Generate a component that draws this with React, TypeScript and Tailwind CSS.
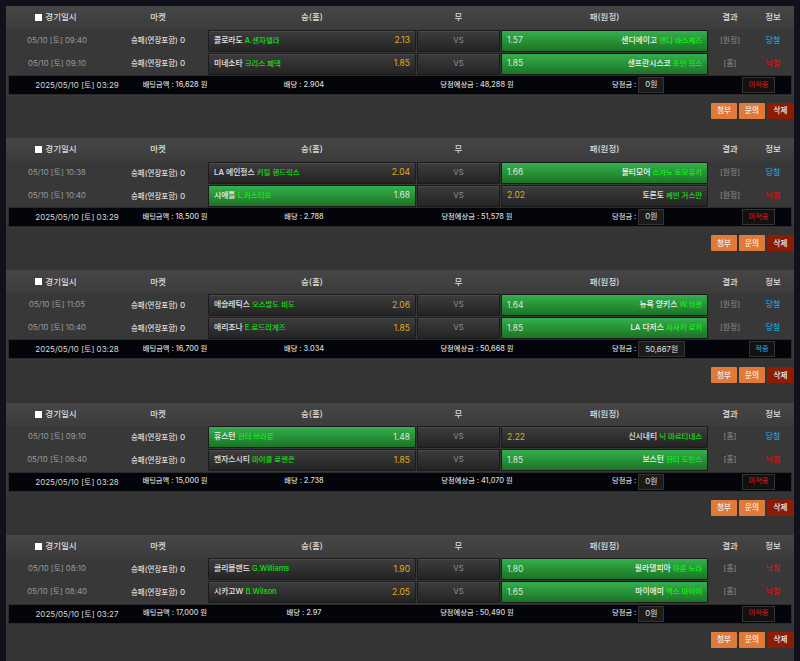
import React from 'react';

interface Side {
  team: string;
  pitcher: string;
  odds: string;
  picked?: boolean;
}

interface Game {
  date: string;
  home: Side;
  away: Side;
  result: string;
  won: boolean;
}

interface Bet {
  placed: string;
  amount: string;
  odds: string;
  expected: string;
  payout: string;
  hit?: boolean;
  games: Game[];
}

const bets: Bet[] = [
  {
    placed: '2025/05/10 [토] 03:29',
    amount: '16,628',
    odds: '2.904',
    expected: '48,288',
    payout: '0원',
    games: [
      {
        date: '05/10 [토] 09:40',
        home: { team: '콜로라도', pitcher: 'A.센자텔라', odds: '2.13' },
        away: { team: '샌디에이고', pitcher: '랜디 바스케즈', odds: '1.57', picked: true },
        result: '[원정]',
        won: true,
      },
      {
        date: '05/10 [토] 09:10',
        home: { team: '미네소타', pitcher: '크리스 페덱', odds: '1.85' },
        away: { team: '샌프란시스코', pitcher: '조던 힉스', odds: '1.85', picked: true },
        result: '[홈]',
        won: false,
      },
    ],
  },
  {
    placed: '2025/05/10 [토] 03:29',
    amount: '18,500',
    odds: '2.788',
    expected: '51,578',
    payout: '0원',
    games: [
      {
        date: '05/10 [토] 10:38',
        home: { team: 'LA 에인절스', pitcher: '키릴 헨드릭스', odds: '2.04' },
        away: { team: '볼티모어', pitcher: '스가노 토모유키', odds: '1.66', picked: true },
        result: '[원정]',
        won: true,
      },
      {
        date: '05/10 [토] 10:40',
        home: { team: '시애틀', pitcher: 'L.카스티요', odds: '1.68', picked: true },
        away: { team: '토론토', pitcher: '케빈 거스만', odds: '2.02' },
        result: '[원정]',
        won: false,
      },
    ],
  },
  {
    placed: '2025/05/10 [토] 03:28',
    amount: '16,700',
    odds: '3.034',
    expected: '50,668',
    payout: '50,667원',
    hit: true,
    games: [
      {
        date: '05/10 [토] 11:05',
        home: { team: '애슬레틱스', pitcher: '오스발도 비도', odds: '2.06' },
        away: { team: '뉴욕 양키스', pitcher: 'W.워렌', odds: '1.64', picked: true },
        result: '[원정]',
        won: true,
      },
      {
        date: '05/10 [토] 10:40',
        home: { team: '애리조나', pitcher: 'E.로드리게즈', odds: '1.85' },
        away: { team: 'LA 다저스', pitcher: '사사키 로키', odds: '1.85', picked: true },
        result: '[원정]',
        won: true,
      },
    ],
  },
  {
    placed: '2025/05/10 [토] 03:28',
    amount: '15,000',
    odds: '2.738',
    expected: '41,070',
    payout: '0원',
    games: [
      {
        date: '05/10 [토] 09:10',
        home: { team: '휴스턴', pitcher: '헌터 브라운', odds: '1.48', picked: true },
        away: { team: '신시내티', pitcher: '닉 마르티네스', odds: '2.22' },
        result: '[홈]',
        won: true,
      },
      {
        date: '05/10 [토] 08:40',
        home: { team: '캔자스시티', pitcher: '마이클 로렌즌', odds: '1.85' },
        away: { team: '보스턴', pitcher: '헌터 도빈스', odds: '1.85', picked: true },
        result: '[홈]',
        won: false,
      },
    ],
  },
  {
    placed: '2025/05/10 [토] 03:27',
    amount: '17,000',
    odds: '2.97',
    expected: '50,490',
    payout: '0원',
    games: [
      {
        date: '05/10 [토] 08:10',
        home: { team: '클리블랜드', pitcher: 'G.Williams', odds: '1.90' },
        away: { team: '필라델피아', pitcher: '아론 노라', odds: '1.80', picked: true },
        result: '[홈]',
        won: false,
      },
      {
        date: '05/10 [토] 08:40',
        home: { team: '시카고W', pitcher: 'B.Wilson', odds: '2.05' },
        away: { team: '마이애미', pitcher: '맥스 마이어', odds: '1.65', picked: true },
        result: '[홈]',
        won: false,
      },
    ],
  },
];

const COLS = 'grid grid-cols-[102px_100px_208px_85px_207px_44px_42px]';

const cellBase = 'h-[22px] flex items-center justify-between px-[5px] border border-[#1b1b1b] rounded-[1px] ';
const cellDark = 'bg-gradient-to-b from-[#3d3d3d] to-[#242424] shadow-[inset_0_1px_0_#4a4a4a]';
const cellGreen = 'bg-gradient-to-b from-[#33b04d] to-[#1c7425]';

function Names({ side }: { side: Side }) {
  return (
    <span className="truncate font-medium">
      <span className={side.picked ? 'text-[#eef4ee] text-[7.8px]' : 'text-[#e4e4e4] text-[7.8px]'}>{side.team}</span>{' '}
      <span className={side.picked ? 'text-[#14f014] text-[7.4px]' : 'text-[#10e010] text-[7.4px]'}>{side.pitcher}</span>
    </span>
  );
}

function Odds({ side }: { side: Side }) {
  return <span className={side.picked ? 'text-[#d8e8d8] text-[8.5px]' : 'text-[#e0ad1f] text-[8.5px]'}>{side.odds}</span>;
}

function BetCard({ bet }: { bet: Bet }) {
  return (
    <section className="h-[132.2px] bg-[#343434]">
      <div className={COLS + ' h-[23px] items-center text-center bg-gradient-to-b from-[#464646] to-[#3c3c3c] text-[#dcdcdc] text-[8.5px] font-medium'}>
        <div className="flex items-center justify-center gap-[3px] pr-[2px]">
          <span className="w-[7px] h-[7px] bg-white" />
          <span>경기일시</span>
        </div>
        <div>마켓</div>
        <div>승(홈)</div>
        <div>무</div>
        <div>패(원정)</div>
        <div>결과</div>
        <div>정보</div>
      </div>

      {bet.games.map((game, i) => (
        <div key={i} className={COLS + ' h-[23px] items-center text-center text-[7.8px] bg-[#383838]'}>
          <div className="text-[#979ba0]">{game.date}</div>
          <div className="text-[#dedede] font-medium text-[7.5px]">
            승패(연장포함) <span className="text-[8px]">0</span>
          </div>
          <div className={cellBase + (game.home.picked ? cellGreen : cellDark)}>
            <Names side={game.home} />
            <Odds side={game.home} />
          </div>
          <div className="h-[22px] mx-[1px] flex items-center justify-center border border-[#1b1b1b] bg-gradient-to-b from-[#3d3d3d] to-[#242424] shadow-[inset_0_1px_0_#4a4a4a] text-[#8e8e8e]">
            VS
          </div>
          <div className={cellBase + (game.away.picked ? cellGreen : cellDark)}>
            <Odds side={game.away} />
            <Names side={game.away} />
          </div>
          <div className="text-[#8e8e8e]">{game.result}</div>
          <div className={game.won ? 'text-[#1a9fd0] font-medium' : 'text-[#d41414] font-medium'}>
            {game.won ? '당첨' : '낙첨'}
          </div>
        </div>
      ))}

      <div className="bg-[#383838] h-[21px] px-[2px] pb-[1px]">
        <div className="h-[20px] grid grid-cols-[136px_60px_198px_148px_176px_1fr] items-center text-center border border-[#2b2b2b] bg-[#03050a] text-[#d6d6d6] text-[7.3px] font-medium">
          <div className="text-[8px] font-normal">{bet.placed}</div>
          <div className="flex justify-center whitespace-nowrap">배팅금액 : {bet.amount} 원</div>
          <div>배당 : {bet.odds}</div>
          <div>당첨예상금 : {bet.expected} 원</div>
          <div className="flex items-center gap-[2px] pl-[61px]">
            <span className="whitespace-nowrap">당첨금 :</span>
            <span className="h-[16px] px-[6px] flex items-center border border-[#333] bg-[#1b1b1b] text-[#e0e0e0] text-[7.8px] font-normal whitespace-nowrap">
              {bet.payout}
            </span>
          </div>
          <div className="flex justify-end pr-[16px]">
            {bet.hit ? (
              <span className="h-[16px] w-[26px] flex items-center justify-center border border-[#333] bg-[#111] text-[#1a9fd0]">적중</span>
            ) : (
              <span className="h-[16px] w-[33px] flex items-center justify-center border border-[#333] bg-[#111] text-[#d41414]">미적중</span>
            )}
          </div>
        </div>
      </div>

      <div className="flex justify-end gap-[2px] pt-[7px] text-[7.5px] font-medium text-[#f2f2f2]">
        <button className="w-[26px] h-[16px] flex items-center justify-center rounded-[1px] bg-[#e07a38]">첨부</button>
        <button className="w-[26px] h-[16px] flex items-center justify-center rounded-[1px] bg-[#e07a38]">문의</button>
        <button className="w-[27px] h-[16px] flex items-center justify-center rounded-[1px] bg-[#8c1d04]">삭제</button>
      </div>
    </section>
  );
}

export default function App() {
  return (
    <div className="h-[661px] overflow-hidden bg-[#10111a] pt-[6px] px-[6px] font-['Inter','Noto_Sans_CJK_KR',sans-serif]">
      {bets.map((bet, i) => (
        <BetCard key={i} bet={bet} />
      ))}
    </div>
  );
}
